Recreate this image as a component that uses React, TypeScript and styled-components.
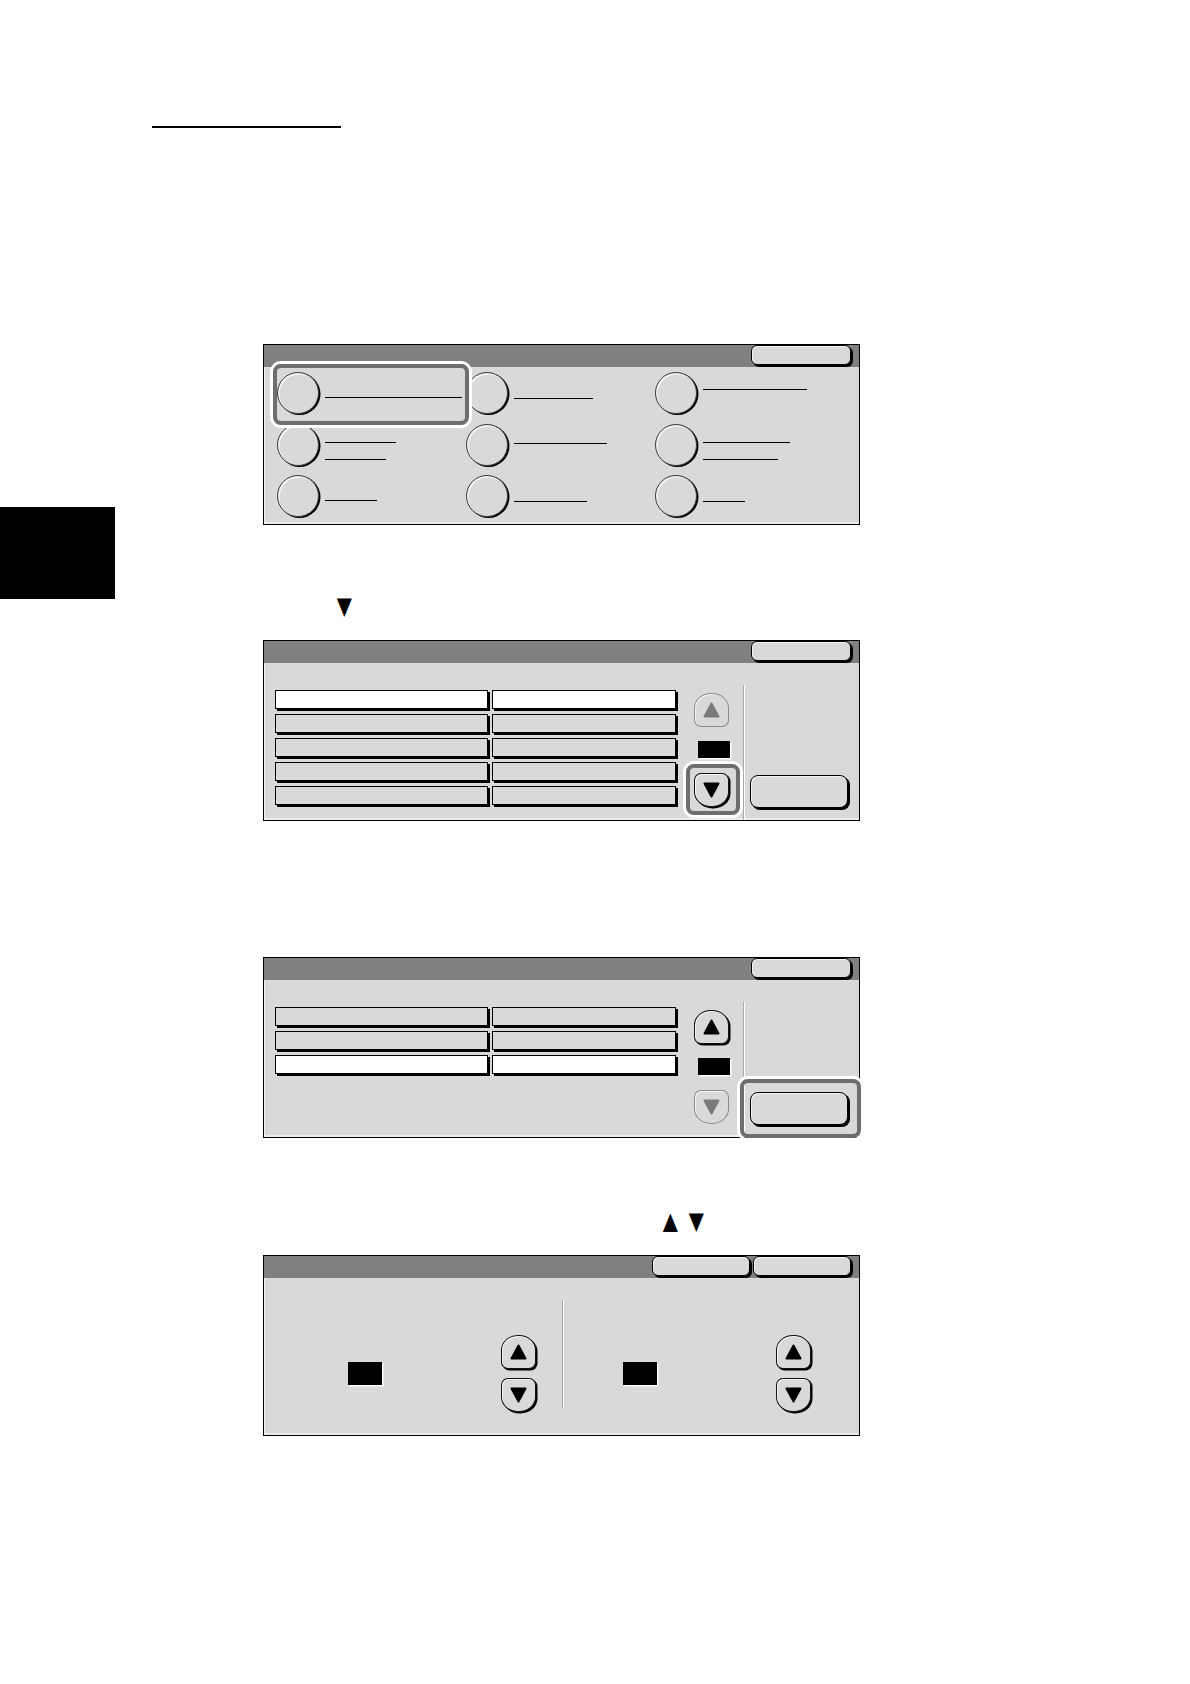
import React from "react";
import styled, { createGlobalStyle } from "styled-components";

const Global = createGlobalStyle`
  html, body { margin: 0; padding: 0; background: #fff; }
  body { font-family: "DejaVu Sans", "Liberation Sans", sans-serif; }
`;

const Page = styled.div`
  display: flex;
  width: 1190px;
  min-height: 1684px;
  background: #fff;
`;

const Rail = styled.aside`
  width: 115px;
  flex-shrink: 0;
  padding-top: 507px;
  box-sizing: border-box;
`;

const ThumbTab = styled.div`
  height: 92px;
  background: #000;
`;

const Main = styled.main`
  flex: 1;
  padding: 126px 0 0 37px;
  display: flex;
  flex-direction: column;
  align-items: flex-start;
`;

const HeadRule = styled.div`
  width: 189px;
  height: 2px;
  background: #000;
`;

const Cue = styled.p<{ $top: number; $left: number }>`
  margin: ${(p) => p.$top}px 0 0 ${(p) => p.$left}px;
  height: 19px;
  display: flex;
  align-items: center;
  gap: 8px;
  font-family: "DejaVu Sans", sans-serif;
  font-size: 24px;
  line-height: 19px;
  color: #000;
`;

const Glyph = styled.span`
  display: inline-block;
  transform: scaleX(0.82);
`;

const Panel = styled.section<{ $top: number }>`
  position: relative;
  margin: ${(p) => p.$top}px 0 0 111px;
  width: 597px;
  height: 181px;
  box-sizing: border-box;
  border: 1px solid #000;
  background: #d9d9d9;
  box-shadow: inset 1px 0 0 #f2f2f2, inset 0 -2px 0 #ececec;
  display: flex;
  flex-direction: column;
`;

const TitleBar = styled.header`
  height: 22px;
  flex-shrink: 0;
  background: #808080;
  display: flex;
  justify-content: flex-end;
  align-items: flex-start;
  gap: 3px;
  padding-right: 8px;
`;

const TopButton = styled.div<{ $w: number }>`
  width: ${(p) => p.$w}px;
  height: 20px;
  box-sizing: border-box;
  background: #d9d9d9;
  border: 1px solid #000;
  border-radius: 6px;
  box-shadow: 2px 2px 0 #000, inset 1px 1px 0 #f4f4f4;
`;

const Body = styled.div`
  position: relative;
  flex: 1;
  display: flex;
  align-items: flex-start;
`;

/* ---------- panel 1: option grid ---------- */

const OptionGrid = styled.div`
  display: grid;
  grid-template-columns: repeat(3, 189px);
  grid-template-rows: 52px 51px 51px;
  padding: 5px 0 0 13px;
`;

const Option = styled.div`
  display: flex;
  align-items: flex-start;
`;

const Radio = styled.span`
  width: 42px;
  height: 42px;
  flex-shrink: 0;
  box-sizing: border-box;
  border-radius: 50%;
  background: #d9d9d9;
  border: 1.5px solid #3c3c3c;
  box-shadow: 1.5px 1px 0 #000, inset 1.5px 1.5px 0 #f4f4f4;
`;

const Label = styled.span<{ $top: number }>`
  display: flex;
  flex-direction: column;
  gap: 16px;
  margin-left: 6px;
  padding-top: ${(p) => p.$top}px;
`;

const LabelLine = styled.span<{ $w: number }>`
  display: block;
  width: ${(p) => p.$w}px;
  height: 1px;
  background: #000;
`;

/* ---------- list panels ---------- */

const List = styled.div`
  margin: 27px 0 0 11px;
  display: grid;
  grid-template-columns: 213px 184px;
  grid-auto-rows: 19px;
  column-gap: 4px;
  row-gap: 5px;
`;

const Cell = styled.div<{ $on?: boolean }>`
  box-sizing: border-box;
  border: 1px solid #000;
  background: ${(p) => (p.$on ? "#fff" : "#d9d9d9")};
  box-shadow: 2px 2px 0 #000;
`;

const ArrowColumn = styled.div`
  width: 37px;
  margin-left: 18px;
  padding-top: 30px;
  display: flex;
  flex-direction: column;
  align-items: flex-start;
`;

const ArrowBtn = styled.div<{ $dir: "up" | "down"; $off?: boolean; $mt?: number }>`
  width: 35px;
  height: 34px;
  margin-top: ${(p) => p.$mt ?? 0}px;
  box-sizing: border-box;
  display: flex;
  align-items: center;
  justify-content: center;
  background: #d9d9d9;
  border: 1.5px solid ${(p) => (p.$off ? "#8a8a8a" : "#111")};
  border-radius: ${(p) =>
    p.$dir === "up"
      ? "17px 17px 7px 7px / 15px 15px 7px 7px"
      : "7px 7px 17px 17px / 7px 7px 15px 15px"};
  box-shadow: ${(p) =>
    p.$off
      ? "inset 1px 1px 0 #f6f6f6"
      : "1.5px 1.5px 0 #000, inset 1px 1px 0 #f6f6f6"};
  color: ${(p) => (p.$off ? "#7a7a7a" : "#000")};
`;

const Counter = styled.div<{ $w: number; $h: number; $mt?: number; $ml?: number }>`
  width: ${(p) => p.$w}px;
  height: ${(p) => p.$h}px;
  margin-top: ${(p) => p.$mt ?? 0}px;
  margin-left: ${(p) => p.$ml ?? 0}px;
  flex-shrink: 0;
  background: #000;
  box-shadow: 1.5px 1.5px 0 #fff;
`;

const Divider = styled.div<{ $ml: number; $h?: number }>`
  width: 1px;
  margin: 22px 0 0 ${(p) => p.$ml}px;
  align-self: ${(p) => (p.$h ? "flex-start" : "stretch")};
  height: ${(p) => (p.$h ? `${p.$h}px` : "auto")};
  background: #a8a8a8;
  border-right: 1px solid #fff;
  flex-shrink: 0;
`;

const SideColumn = styled.div`
  padding: 112px 0 0 5px;
`;

const WideButton = styled.div`
  width: 98px;
  height: 33px;
  box-sizing: border-box;
  background: #d9d9d9;
  border: 1.5px solid #000;
  border-radius: 8px;
  box-shadow: 2px 2px 0 #000, inset 1px 1px 0 #f4f4f4;
`;

const Ring = styled.div<{ $x: number; $y: number; $w: number; $h: number }>`
  position: absolute;
  left: ${(p) => p.$x}px;
  top: ${(p) => p.$y}px;
  width: ${(p) => p.$w}px;
  height: ${(p) => p.$h}px;
  box-sizing: border-box;
  border: 3.5px solid #fff;
  border-radius: 11px;
  pointer-events: none;
  &::after {
    content: "";
    position: absolute;
    inset: 0;
    border: 4px solid #6e6e6e;
    border-radius: 8px;
  }
`;

/* ---------- panel 4: two steppers ---------- */

const Stepper = styled.div<{ $w?: number; $pl: number }>`
  display: flex;
  align-items: flex-start;
  ${(p) => (p.$w ? `width: ${p.$w}px;` : "flex: 1;")}
  padding-left: ${(p) => p.$pl}px;
  box-sizing: border-box;
  flex-shrink: 0;
`;

const ArrowStack = styled.div`
  margin: 57px 0 0 119px;
  display: flex;
  flex-direction: column;
  gap: 9px;
`;

const Tri = ({ dir }: { dir: "up" | "down" }) => (
  <svg width="17" height="16" viewBox="0 0 17 16" aria-hidden>
    <polygon
      points={dir === "up" ? "8.5,1.5 15.5,14.5 1.5,14.5" : "1.5,1.5 15.5,1.5 8.5,14.5"}
      fill="currentColor"
      stroke="currentColor"
      strokeWidth="2"
      strokeLinejoin="round"
    />
  </svg>
);

const options = [
  { top: 25, lines: [137] },
  { top: 26, lines: [79] },
  { top: 17, lines: [104] },
  { top: 18, lines: [71, 61] },
  { top: 19, lines: [93] },
  { top: 18, lines: [87, 75] },
  { top: 25, lines: [52] },
  { top: 26, lines: [73] },
  { top: 26, lines: [42] },
];

const ListPanel = ({
  top,
  rows,
  selected,
  upOff,
  downOff,
  ring,
}: {
  top: number;
  rows: number;
  selected: number;
  upOff?: boolean;
  downOff?: boolean;
  ring: "down" | "button";
}) => (
  <Panel $top={top}>
    <TitleBar>
      <TopButton $w={100} />
    </TitleBar>
    <Body>
      <List>
        {Array.from({ length: rows }).map((_, i) => (
          <React.Fragment key={i}>
            <Cell $on={i === selected} />
            <Cell $on={i === selected} />
          </React.Fragment>
        ))}
      </List>
      <ArrowColumn>
        <ArrowBtn $dir="up" $off={upOff}>
          <Tri dir="up" />
        </ArrowBtn>
        <Counter $w={32} $h={17} $mt={14} $ml={4} />
        <ArrowBtn $dir="down" $off={downOff} $mt={15}>
          <Tri dir="down" />
        </ArrowBtn>
      </ArrowColumn>
      <Divider $ml={12} />
      <SideColumn>
        <WideButton />
      </SideColumn>
      {ring === "down" ? (
        <Ring $x={419} $y={98} $w={60} $h={57} />
      ) : (
        <Ring $x={473} $y={96} $w={127} $h={65} />
      )}
    </Body>
  </Panel>
);

export default function App() {
  return (
    <>
      <Global />
      <Page>
        <Rail>
          <ThumbTab />
        </Rail>
        <Main>
          <HeadRule />

          <Panel $top={216}>
            <TitleBar>
              <TopButton $w={100} />
            </TitleBar>
            <Body>
              <OptionGrid>
                {options.map((o, i) => (
                  <Option key={i}>
                    <Radio />
                    <Label $top={o.top}>
                      {o.lines.map((w, j) => (
                        <LabelLine key={j} $w={w} />
                      ))}
                    </Label>
                  </Option>
                ))}
              </OptionGrid>
              <Ring $x={6} $y={-6} $w={202} $h={67} />
            </Body>
          </Panel>

          <Cue $top={72} $left={183}>
            <Glyph>▼</Glyph>
          </Cue>

          <ListPanel top={24} rows={5} selected={0} upOff ring="down" />

          <ListPanel top={136} rows={3} selected={2} downOff ring="button" />

          <Cue $top={74} $left={509}>
            <Glyph>▲</Glyph>
            <Glyph>▼</Glyph>
          </Cue>

          <Panel $top={24}>
            <TitleBar>
              <TopButton $w={98} />
              <TopButton $w={98} />
            </TitleBar>
            <Body>
              <Stepper $w={298} $pl={84}>
                <Counter $w={34} $h={23} $mt={84} />
                <ArrowStack>
                  <ArrowBtn $dir="up">
                    <Tri dir="up" />
                  </ArrowBtn>
                  <ArrowBtn $dir="down">
                    <Tri dir="down" />
                  </ArrowBtn>
                </ArrowStack>
              </Stepper>
              <Divider $ml={0} $h={109} />
              <Stepper $pl={59}>
                <Counter $w={34} $h={23} $mt={84} />
                <ArrowStack>
                  <ArrowBtn $dir="up">
                    <Tri dir="up" />
                  </ArrowBtn>
                  <ArrowBtn $dir="down">
                    <Tri dir="down" />
                  </ArrowBtn>
                </ArrowStack>
              </Stepper>
            </Body>
          </Panel>
        </Main>
      </Page>
    </>
  );
}
